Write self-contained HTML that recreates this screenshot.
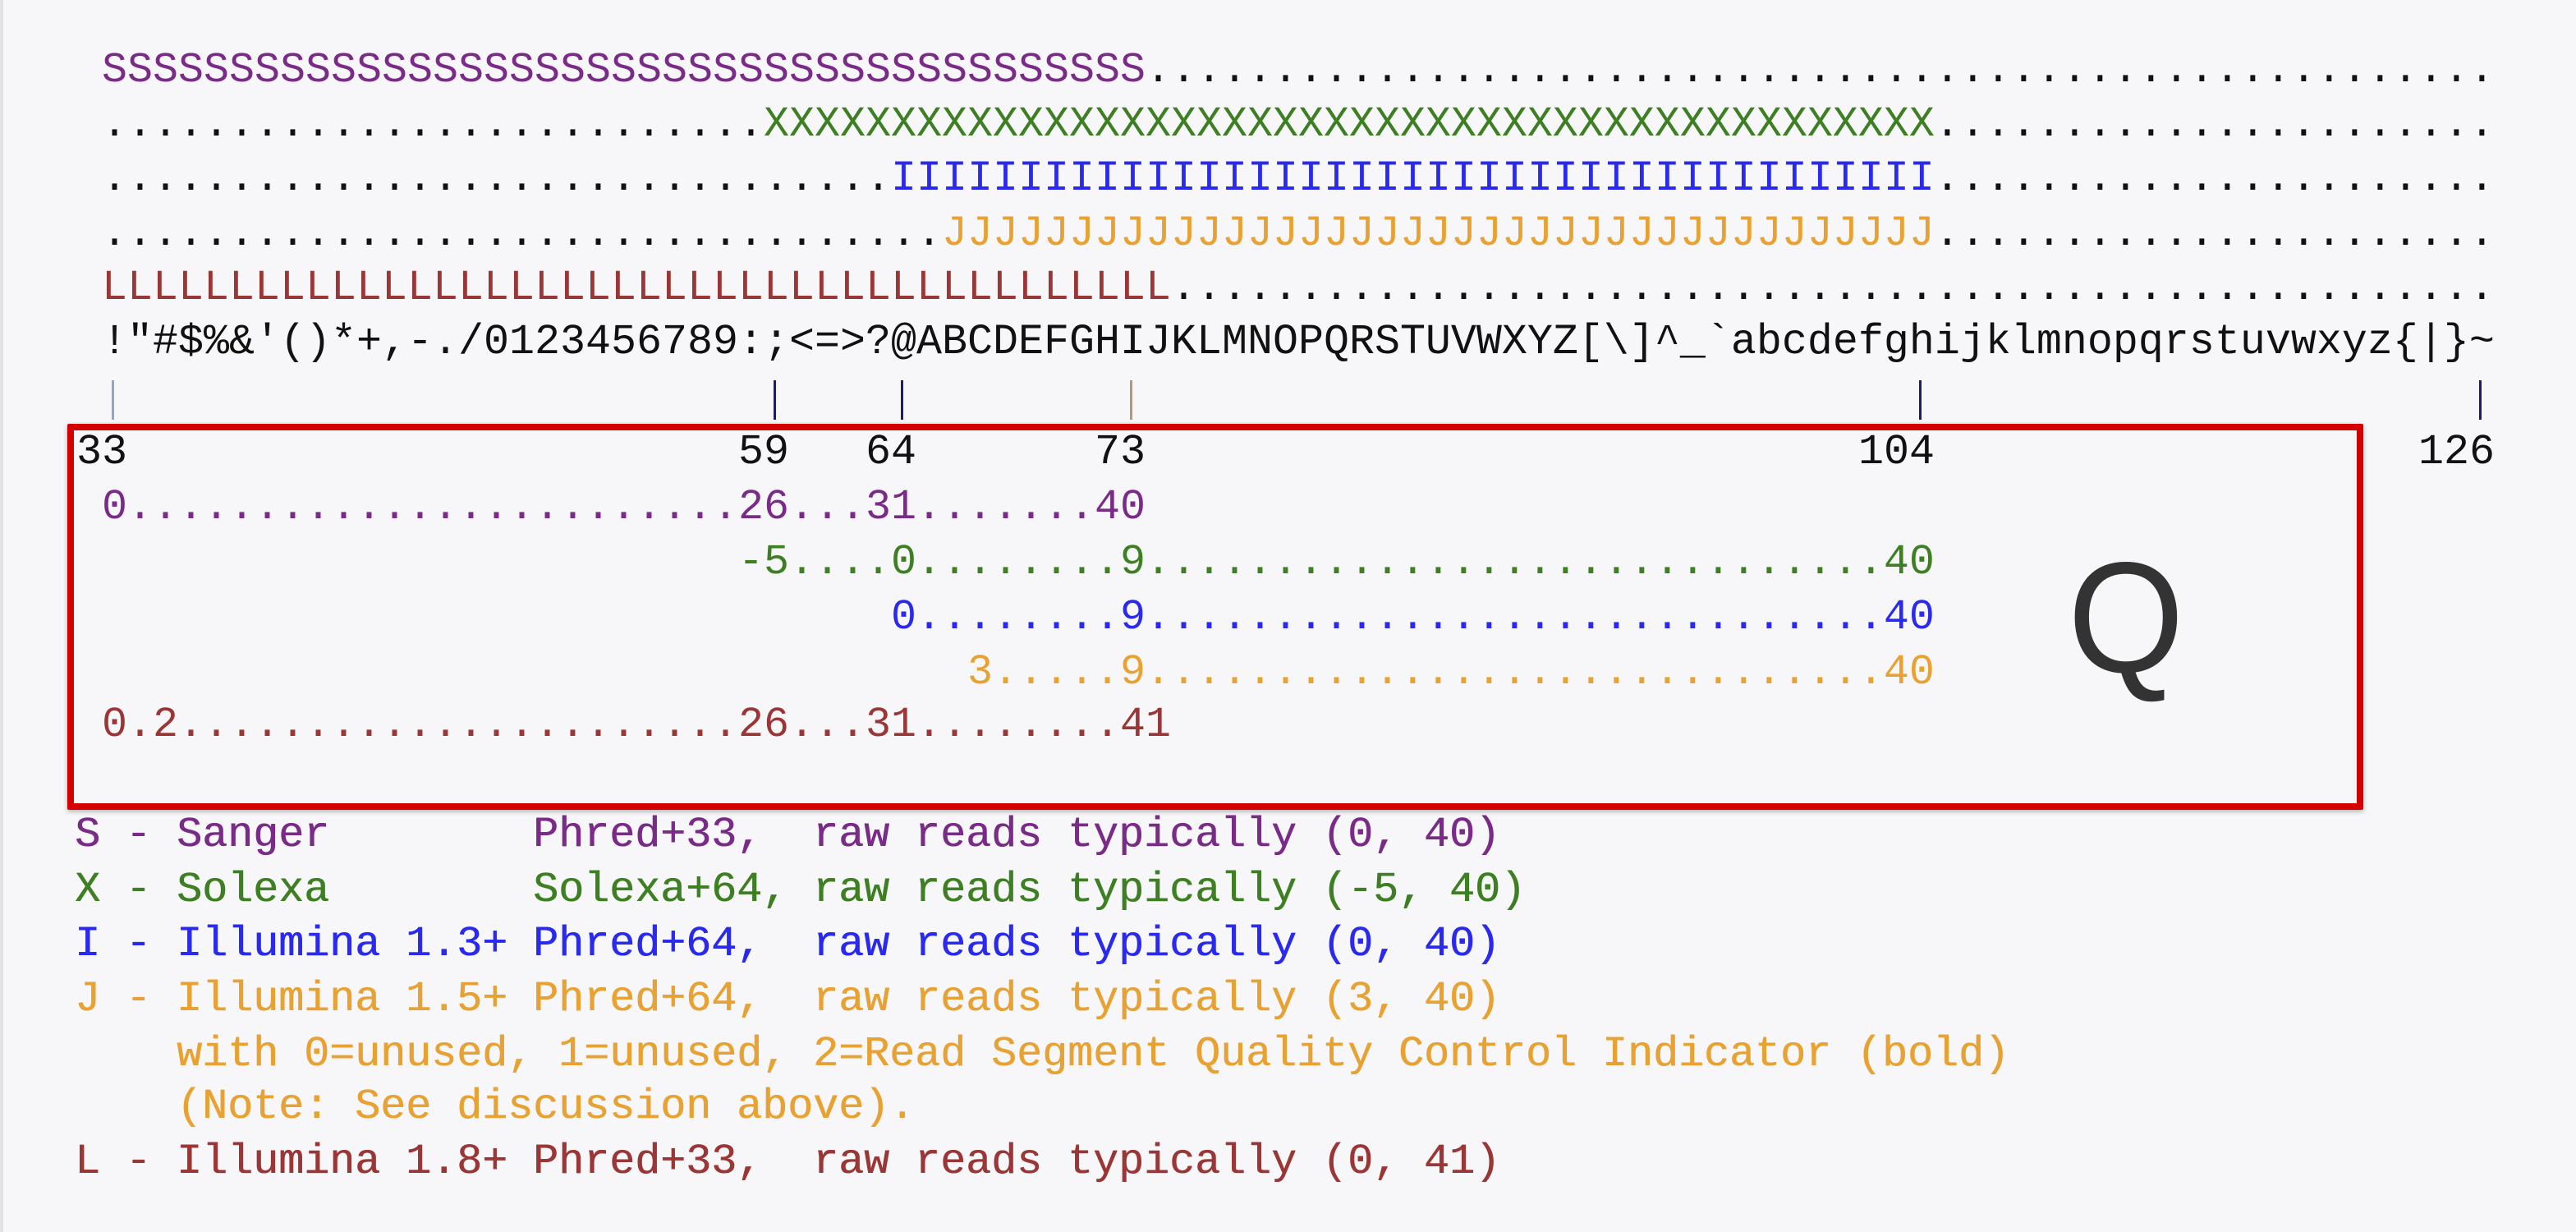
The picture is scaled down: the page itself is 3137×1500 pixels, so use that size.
<!DOCTYPE html>
<html><head><meta charset="utf-8"><style>
html,body{margin:0;padding:0}
body{width:3137px;height:1500px;background:#f7f7f9;position:relative;overflow:hidden;border-left:4px solid #e2e2e6;box-sizing:border-box}
.r{position:absolute;white-space:pre;font-family:"Liberation Mono",monospace;font-size:51.67px;line-height:66px;height:66px}
.pu{color:#7a2a87}.gr{color:#3d7f22}.bl{color:#2a2aee}.or{color:#e8a233}.br{color:#9a3636}.k{color:#111}
.t{position:absolute;top:463px;height:48px;width:3px}
.box{position:absolute;left:78px;top:516px;width:2796px;height:470px;border:8px solid #d40000;box-sizing:border-box;box-shadow:0 2px 6px rgba(0,0,0,0.3);border-radius:2px}
.q{position:absolute;left:2514px;top:656px;font-family:"Liberation Sans",sans-serif;font-size:192px;line-height:192px;color:#333;transform:scaleX(0.95);transform-origin:left top}
.lg{font-weight:normal;text-shadow:0.6px 0 0 currentColor}
</style></head><body>
<div class="r pu" style="left:120px;top:53px">SSSSSSSSSSSSSSSSSSSSSSSSSSSSSSSSSSSSSSSSS<span class="k">.....................................................</span></div>
<div class="r k" style="left:120px;top:119px">..........................<span class="gr">XXXXXXXXXXXXXXXXXXXXXXXXXXXXXXXXXXXXXXXXXXXXXX</span>......................</div>
<div class="r k" style="left:120px;top:185px">...............................<span class="bl">IIIIIIIIIIIIIIIIIIIIIIIIIIIIIIIIIIIIIIIII</span>......................</div>
<div class="r k" style="left:120px;top:252px">.................................<span class="or">JJJJJJJJJJJJJJJJJJJJJJJJJJJJJJJJJJJJJJJ</span>......................</div>
<div class="r br" style="left:120px;top:318px">LLLLLLLLLLLLLLLLLLLLLLLLLLLLLLLLLLLLLLLLLL<span class="k">....................................................</span></div>
<div class="r k" style="left:120px;top:384px">!"#$%&amp;'()*+,-./0123456789:;&lt;=&gt;?@ABCDEFGHIJKLMNOPQRSTUVWXYZ[\]^_`abcdefghijklmnopqrstuvwxyz{|}~</div>

<div class="t" style="left:132px;background:#9aa6b8"></div>
<div class="t" style="left:938px;background:#1a1f5c"></div>
<div class="t" style="left:1093px;background:#1a1f5c"></div>
<div class="t" style="left:1372px;background:#a89a88"></div>
<div class="t" style="left:2333px;background:#1a1f5c"></div>
<div class="t" style="left:3015px;background:#1a1f5c"></div>

<div class="box"></div>
<div class="q">Q</div>

<div class="r k" style="left:89px;top:518px">33</div>
<div class="r k" style="left:895px;top:518px">59</div>
<div class="r k" style="left:1050px;top:518px">64</div>
<div class="r k" style="left:1329px;top:518px">73</div>
<div class="r k" style="left:2259px;top:518px">104</div>
<div class="r k" style="left:2941px;top:518px">126</div>

<div class="r pu" style="left:89px;top:585px"> 0........................26...31.......40</div>
<div class="r gr" style="left:89px;top:652px">                          -5....0........9.............................40</div>
<div class="r bl" style="left:89px;top:719px">                                0........9.............................40</div>
<div class="r or" style="left:89px;top:786px">                                   3.....9.............................40</div>
<div class="r br" style="left:89px;top:850px"> 0.2......................26...31........41</div>

<div class="r pu lg" style="left:87px;top:984px">S - Sanger        Phred+33,  raw reads typically (0, 40)</div>
<div class="r gr lg" style="left:87px;top:1051px">X - Solexa        Solexa+64, raw reads typically (-5, 40)</div>
<div class="r bl lg" style="left:87px;top:1117px">I - Illumina 1.3+ Phred+64,  raw reads typically (0, 40)</div>
<div class="r or lg" style="left:87px;top:1184px">J - Illumina 1.5+ Phred+64,  raw reads typically (3, 40)</div>
<div class="r or lg" style="left:87px;top:1251px">    with 0=unused, 1=unused, 2=Read Segment Quality Control Indicator (bold)</div>
<div class="r or lg" style="left:87px;top:1315px">    (Note: See discussion above).</div>
<div class="r br lg" style="left:87px;top:1382px">L - Illumina 1.8+ Phred+33,  raw reads typically (0, 41)</div>
</body></html>
